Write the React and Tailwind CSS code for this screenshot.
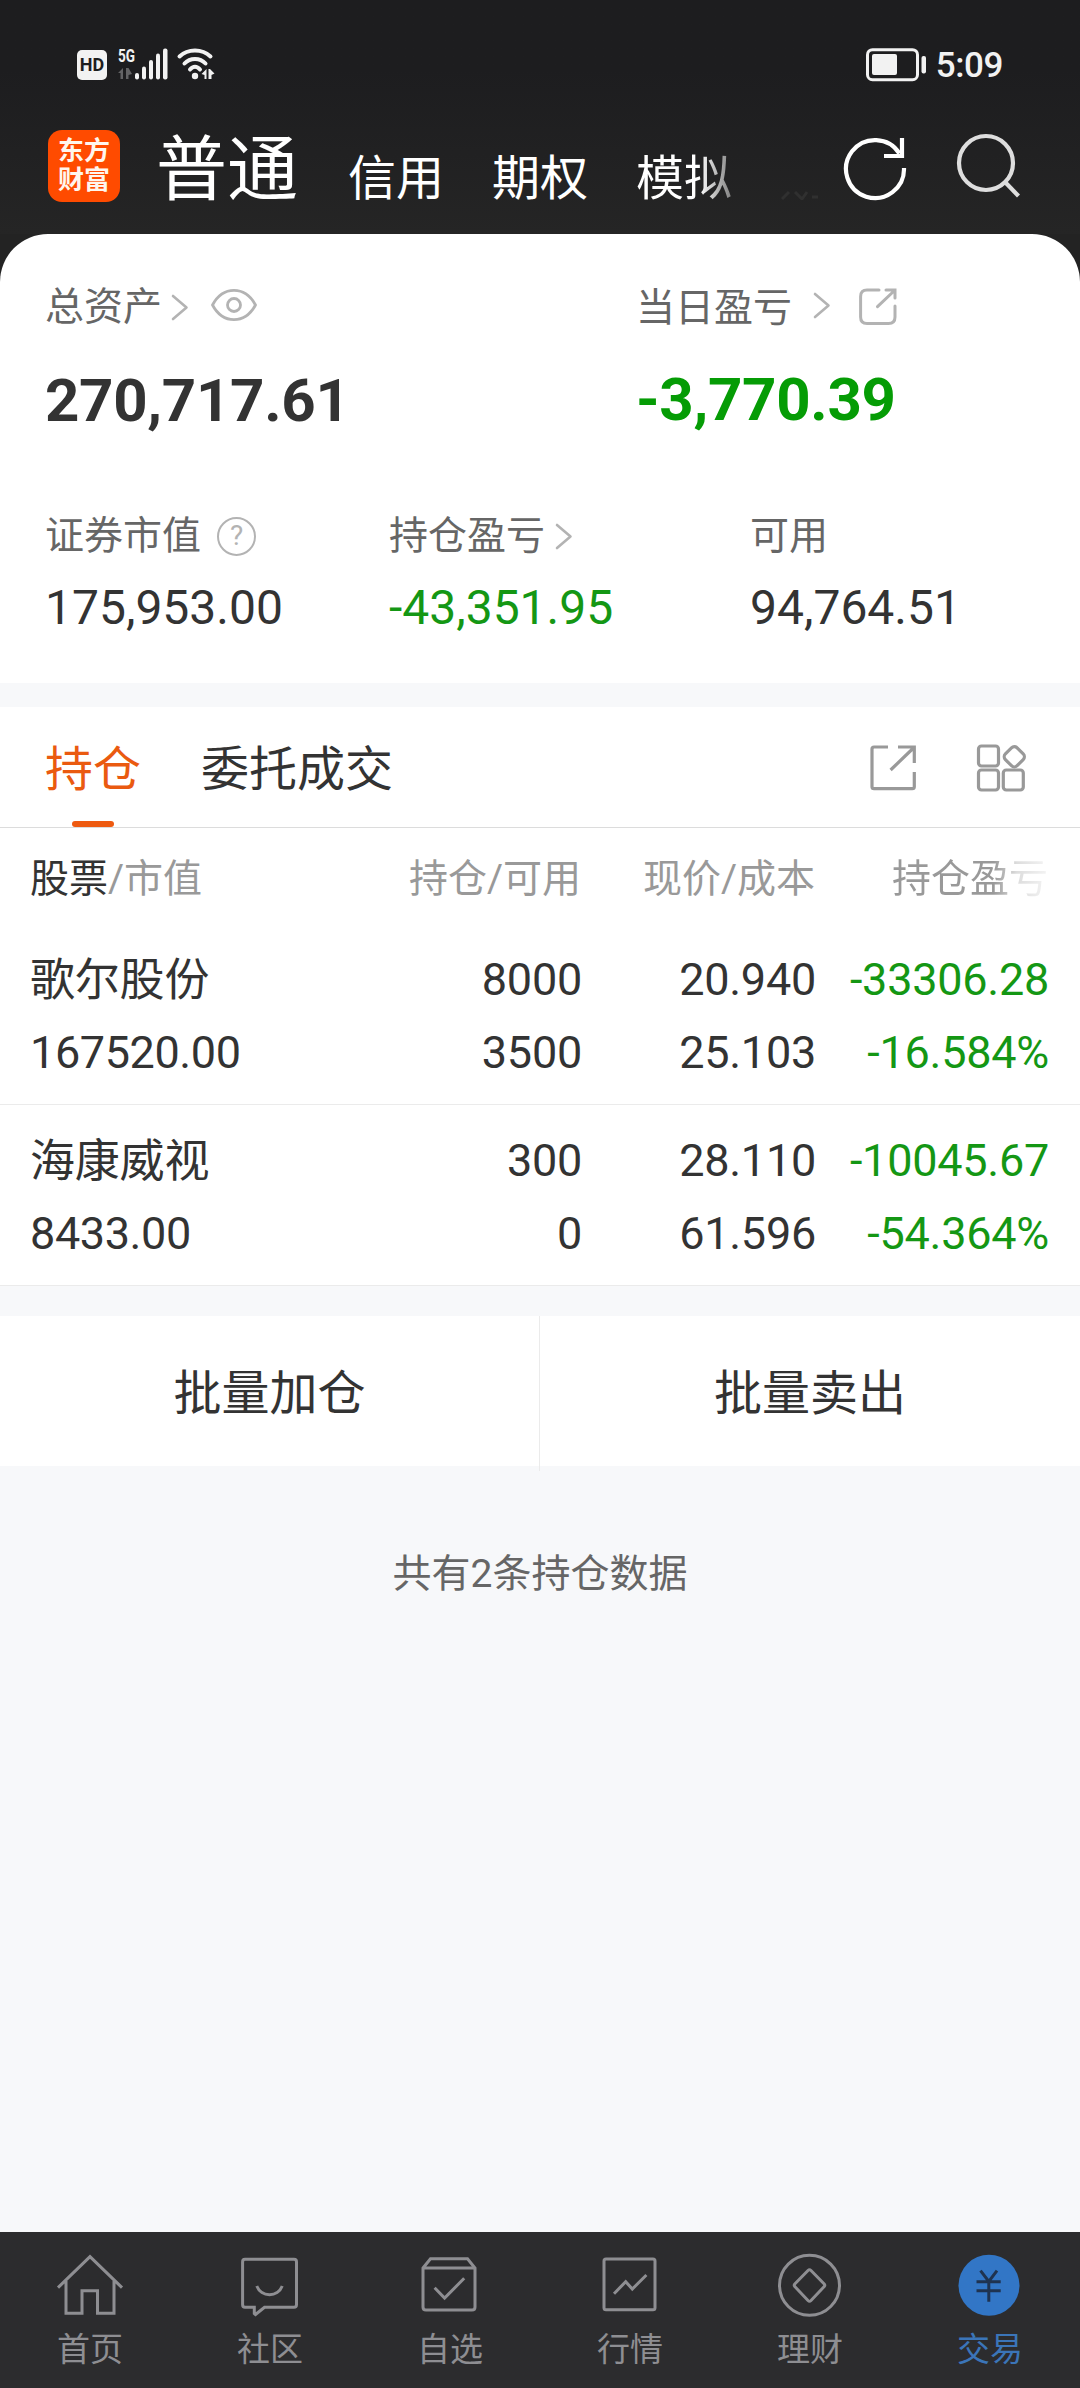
const TOP_TABS = ["信用", "期权"];

const HOLDINGS = [
  { name: "歌尔股份", value: "167520.00", amount: "8000", usable: "3500", price: "20.940", cost: "25.103", profit: "-33306.28", rate: "-16.584%" },
  { name: "海康威视", value: "8433.00", amount: "300", usable: "0", price: "28.110", cost: "61.596", profit: "-10045.67", rate: "-54.364%" },
];

const NAV_ITEMS = [
  {
    label: "首页",
    icon: (
      <path d="M4 37.7 36 6.7 68 37.7M12 31V63.3H28V40.7H43.5V63.3H60V31" />
    ),
  },
  {
    label: "社区",
    icon: (
      <>
        <path d="M11 9.3H60Q62.5 9.3 62.5 12V54.5Q62.5 57.3 60 57.3H30.5L21.5 64.5 20.3 63.5V57.3H11Q8.6 57.3 8.6 54.5V12Q8.6 9.3 11 9.3Z" />
        <path d="M22.8 36C27 47.5 44 47.5 48.2 36" />
      </>
    ),
  },
  {
    label: "自选",
    icon: (
      <>
        <path d="M9 18 16.5 8.7H53.5L61 18V57Q61 60 58 60H12Q9 60 9 57ZM9 18H61" />
        <path d="M20.6 37.7 30.6 48 50.2 28.3" />
      </>
    ),
  },
  {
    label: "行情",
    icon: (
      <>
        <rect x="10" y="9" width="51" height="50.7" rx="2" />
        <path d="M20 43.7 31.7 31.7 38.3 39 52.4 25" />
      </>
    ),
  },
  {
    label: "理财",
    icon: (
      <>
        <circle cx="35.5" cy="35.3" r="30" />
        <path d="M34 20.5Q35.500 19 37 20.5L50 33.8Q51.500 35.3 50 36.8L37 50.5Q35.500 52 34 50.5L21 36.8Q19.500 35.3 21 33.8Z" />
      </>
    ),
  },
  {
    label: "交易",
    active: true,
    icon: (
      <>
        <circle cx="35" cy="35.3" r="30.5" fill="#3276c6" stroke="none" />
        <path d="M26.500 20.7 34.800 31.5 43 20.7M34.800 31.5V51.7M22.500 31.7H46.700M22.500 40.7H46.700" stroke="#1f3350" />
      </>
    ),
  },
];

function Chevron({ className }) {
  return (
    <svg className={className} width="18" height="28" viewBox="0 0 18 28" fill="none" stroke="#b3b3b3" strokeWidth="2.6" strokeLinecap="round" strokeLinejoin="round">
      <path d="M2 3 15.5 14.5 2 26" />
    </svg>
  );
}

function StatusBar() {
  return (
    <div className="flex h-[130px] items-start pt-[48px] pl-[77px] pr-[77px]">
      <div className="mt-[2px] flex h-[30px] w-[30px] items-center justify-center rounded-[5px] bg-[#f2f2f2] text-[18px] leading-none font-bold text-[#1d1d1f]">
        HD
      </div>
      <svg className="ml-[10px] overflow-visible" width="52" height="32" viewBox="0 0 52 32" fill="#f2f2f2">
        <text x="1" y="14" fontSize="19" fontWeight="700" textLength="17" lengthAdjust="spacingAndGlyphs">5G</text>
        <path d="M1 25 6 20V31H3.5V25ZM9 20H11.5L15 26 11.5 27V31H9Z" fill="#636365" />
        <rect x="18" y="25" width="4" height="6.5" rx="2" />
        <rect x="25" y="18.5" width="4" height="13" rx="2" />
        <rect x="32" y="12" width="4" height="19.5" rx="2" />
        <rect x="39" y="5.5" width="4" height="26" rx="2" />
        <rect x="46" y="0.5" width="4.5" height="31" rx="2" />
      </svg>
      <svg className="ml-[7px]" width="40" height="32" viewBox="0 0 40 32" fill="none" stroke="#f2f2f2" strokeWidth="4" strokeLinecap="round">
        <path d="M3.5 8.5C12 .5 26 .5 34.5 8.5M8.5 15.5C14 9.5 24 9.5 29.5 15.5M14 21.5C17 17.8 21 17.8 24 21.5" />
        <circle cx="19" cy="28" r="3.2" fill="#f2f2f2" stroke="none" />
        <path d="M25.5 26 30.5 21V31H28.5V27ZM32.5 21H34L38.5 25.5 35.5 27V31H32.5Z" fill="#f2f2f2" stroke="none" />
      </svg>
      <svg className="ml-auto" width="62" height="34" viewBox="0 0 62 34">
        <rect x="1.5" y="1.7" width="50" height="30" rx="5" fill="none" stroke="#f2f2f2" strokeWidth="3" />
        <rect x="6" y="6" width="25" height="21" rx="2" fill="#f2f2f2" />
        <rect x="55.5" y="8" width="4.5" height="17.5" rx="2" fill="#f2f2f2" />
      </svg>
      <span className="ml-[8px] text-[35px] leading-[35px] font-medium tracking-[-0.4px] text-[#f2f2f2]">5:09</span>
    </div>
  );
}

function TitleBar() {
  return (
    <div className="flex h-[72px] items-start pl-[48px] text-white">
      <div className="flex h-[72px] w-[72px] flex-col items-center justify-center rounded-[14px] bg-[#ff4b00] text-[26px] leading-[29px] font-bold text-[#fff6ee]">
        <span>东方</span>
        <span>财富</span>
      </div>
      <span className="ml-[36px] text-[71px] leading-[79px]">普通</span>
      <div className="ml-[50px] flex gap-[48px] text-[48px] leading-[98px]">
        {TOP_TABS.map((tab) => (
          <span key={tab}>{tab}</span>
        ))}
        <span className="bg-linear-to-r from-white from-66% to-[#808080] bg-clip-text text-transparent">模拟</span>
      </div>
      {/* next tab, almost fully faded out */}
      <svg className="mt-[61px] ml-[49px] shrink-0" width="38" height="9" viewBox="0 0 38 9" stroke="#303030" strokeWidth="3" fill="none">
        <path d="M1 8 8 1M14 1 21 8 26 1M31 6H37" />
      </svg>
      <svg className="ml-[20px] shrink-0" width="72" height="72" viewBox="0 0 72 72" fill="none" stroke="#fff" strokeWidth="4.2">
        <path d="M65 38A29 29 0 1 1 60.5 23.5" />
        <path d="M63 8V26H45" />
      </svg>
      <svg className="ml-[38px] shrink-0" width="72" height="72" viewBox="0 0 72 72" fill="none" stroke="#dedede" strokeWidth="4.2">
        <circle cx="37" cy="33" r="27" />
        <path d="M56 52 69.5 66" />
      </svg>
    </div>
  );
}

function Summary() {
  return (
    <section className="h-[449px] rounded-t-[48px] bg-white pt-[49px] text-[#333]">
      <div className="flex pl-[45px]">
        <div className="w-[591px]">
          <div className="flex h-[48px] items-center text-[39px] leading-[48px] text-[#666]">
            总资产
            <Chevron className="ml-[9px]" />
            <svg className="mb-[5px] ml-[22px]" width="46" height="34" viewBox="0 0 46 34" fill="none" stroke="#b3b3b3" strokeWidth="2.8">
              <path d="M1.5 17C12-2.5 34-2.5 44.5 17C34 36.5 12 36.5 1.5 17Z" strokeLinejoin="round" />
              <circle cx="23" cy="17" r="6.5" />
            </svg>
          </div>
          <div className="mt-[34px] text-[60px] leading-[72px] font-bold tracking-[-0.3px]">270,717.61</div>
        </div>
        <div>
          <div className="flex h-[48px] items-center pt-[2px] text-[39px] leading-[48px] text-[#666]">
            当日盈亏
            <Chevron className="mb-[6px] ml-[21px]" />
            <svg className="mb-[3px] ml-[24px]" width="44" height="44" viewBox="0 0 44 44" fill="none" stroke="#b3b3b3" strokeWidth="3" strokeLinecap="round">
              <path d="M24 5H12Q5.6 5 5.6 11.5V32Q5.6 38.5 12 38.5H33.5Q40 38.5 40 32V21M31 5H40V13M39 6 22.5 21.7" />
            </svg>
          </div>
          <div className="mt-[33px] text-[60px] leading-[72px] font-bold tracking-[-0.3px] text-[#059c05]">-3,770.39</div>
        </div>
      </div>

      <div className="mt-[75px] grid grid-cols-[344px_361px_1fr] pl-[45px] text-[48px] leading-[56px]">
        <div>
          <div className="mb-[20px] flex h-[48px] items-center text-[39px] leading-[48px] text-[#666]">
            证券市值
            <span className="ml-[16px] flex h-[39px] w-[39px] items-center justify-center rounded-full border-[2.5px] border-[#b3b3b3] text-[28px] leading-none text-[#b3b3b3]">?</span>
          </div>
          175,953.00
        </div>
        <div>
          <div className="mb-[20px] flex h-[48px] items-center text-[39px] leading-[48px] text-[#666]">
            持仓盈亏
            <Chevron className="ml-[10px]" />
          </div>
          <span className="text-[#149714]">-43,351.95</span>
        </div>
        <div>
          <div className="mb-[20px] h-[48px] text-[39px] leading-[48px] text-[#666]">可用</div>
          94,764.51
        </div>
      </div>
    </section>
  );
}

function HoldingTabs() {
  return (
    <div className="flex h-[121px] items-center border-b border-[#dcdcdc] bg-white pl-[45px] text-[48px] leading-[56px] text-[#333]">
      <div className="relative flex h-[120px] items-center pt-[5px] text-[#ea5a10]">
        持仓
        <span className="absolute bottom-0 left-[27px] h-[6px] w-[42px] rounded-full bg-[#ee5a10]" />
      </div>
      <div className="ml-[60px] pt-[5px]">委托成交</div>
      <svg className="ml-auto" width="52" height="52" viewBox="0 0 52 52" fill="none" stroke="#999" strokeWidth="3.2">
        <path d="M21 6H7Q5 6 5 8V45.7Q5 47.7 7 47.7H45.3Q47.3 47.7 47.3 45.7V31M31 6H47.3V22M47 6.5 23.6 29" />
      </svg>
      <svg className="mt-[2px] mr-[50px] ml-[55px]" width="56" height="56" viewBox="0 0 56 56" fill="none" stroke="#999" strokeWidth="3.2">
        <rect x="4.5" y="6" width="20" height="20" rx="3" />
        <rect x="4.5" y="30" width="20" height="20" rx="3" />
        <rect x="29.3" y="30" width="20" height="20" rx="3" />
        <rect x="32" y="8.5" width="16.6" height="16.6" rx="4" transform="rotate(45 40.3 16.8)" />
      </svg>
    </div>
  );
}

function HoldingTable() {
  return (
    <div className="bg-white text-[#333]">
      <div className="grid h-[96px] grid-cols-[314px_237px_234px_233px] pt-[5px] pl-[30px] text-right text-[39px] leading-[92px] text-[#999]">
        <div className="text-left"><span className="text-[#333]">股票</span>/市值</div>
        <div>持仓/可用</div>
        <div>现价/成本</div>
        <div>
          <span className="bg-linear-to-r from-[#999] from-65% via-[#ddd] via-80% to-[#f4f4f4] bg-clip-text text-transparent">持仓盈亏</span>
        </div>
      </div>
      {HOLDINGS.map((h) => (
        <div key={h.name} className="grid h-[181px] grid-cols-[315px_237px_234px_233px] border-b border-[#ebebeb] pt-[19px] pl-[30px] text-right text-[45px] leading-[73px] tracking-[-0.25px]">
          <div className="text-left">
            <div className="h-[73px] pt-px tracking-[-0.2px]">{h.name}</div>
            <div className="tracking-[-0.4px]">{h.value}</div>
          </div>
          <div>
            <div>{h.amount}</div>
            <div>{h.usable}</div>
          </div>
          <div>
            <div>{h.price}</div>
            <div>{h.cost}</div>
          </div>
          <div className="text-[#149714]">
            <div>{h.profit}</div>
            <div>{h.rate}</div>
          </div>
        </div>
      ))}
    </div>
  );
}

function BottomNav() {
  return (
    <nav className="grid h-[156px] grid-cols-6 bg-[#2c2c2e] text-[#8e8e92]">
      {NAV_ITEMS.map((item) => (
        <div key={item.label} className={item.active ? "flex flex-col items-center pt-[18px] text-[#3b75b8]" : "flex flex-col items-center pt-[18px]"}>
          <svg width="72" height="72" viewBox="0 0 72 72" fill="none" stroke="currentColor" strokeWidth="3">
            {item.icon}
          </svg>
          <span className="mt-[8px] text-[33px] leading-[40px]">{item.label}</span>
        </div>
      ))}
    </nav>
  );
}

export default function App() {
  return (
    <div lang="zh-CN" className="flex h-[2388px] w-[1080px] flex-col overflow-hidden bg-[#f7f8fa] font-['Roboto','Noto_Sans_CJK_SC',sans-serif]">
      <div className="bg-[#232323]">
        <header className="h-[234px] bg-linear-to-b from-[#1d1d1f] from-30% to-[#252525]">
          <StatusBar />
          <TitleBar />
        </header>
        <Summary />
      </div>

      <div className="mt-[24px]">
        <HoldingTabs />
        <HoldingTable />
      </div>

      <div className="mt-[30px] grid h-[150px] grid-cols-2 bg-white text-center text-[48px] leading-[155px] text-[#333]">
        <div className="border-r border-[#ebebeb]">批量加仓</div>
        <div>批量卖出</div>
      </div>
      <p className="mt-[84px] text-center text-[39px] leading-[48px] text-[#666]">共有2条持仓数据</p>

      <div className="mt-auto">
        <BottomNav />
      </div>
    </div>
  );
}
